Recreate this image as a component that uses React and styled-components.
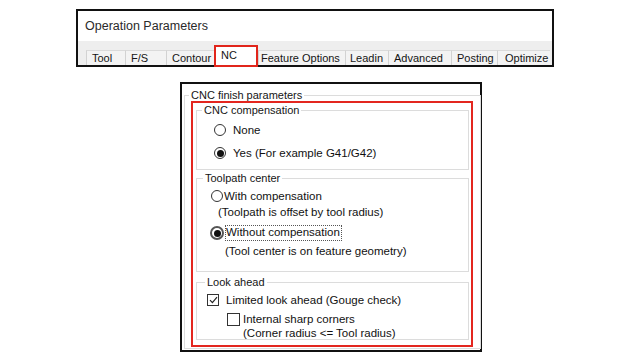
import React from "react";
import styled, { createGlobalStyle } from "styled-components";

const GlobalStyle = createGlobalStyle`
  body {
    margin: 0;
    background: #fff;
    font-family: "Liberation Sans", Arial, sans-serif;
    color: #111;
  }
`;

const Page = styled.div`
  width: 640px;
  height: 360px;
  display: flex;
  flex-direction: column;
  align-items: flex-start;
`;

/* top: operation parameters tab bar */
const OpPanel = styled.section`
  margin: 9px 0 0 76px;
  width: 478px;
  height: 58px;
  box-sizing: border-box;
  border: 2px solid #111;
  display: flex;
  flex-direction: column;
`;

const OpTitle = styled.div`
  height: 30px;
  padding-left: 7px;
  display: flex;
  align-items: center;
  font-size: 12.5px;
  color: #2a2a2a;
`;

const TabStrip = styled.div`
  flex: 1;
  background: #eeeeee;
  display: flex;
  align-items: flex-end;
  padding-left: 8px;
`;

const Tab = styled.div`
  width: ${(p) => p.$w}px;
  height: ${(p) => (p.$active ? 22 : 15)}px;
  margin-bottom: ${(p) => (p.$active ? -2 : 0)}px;
  box-sizing: border-box;
  padding-left: ${(p) => p.$pad}px;
  font-size: 11px;
  line-height: ${(p) => (p.$active ? 16 : 14)}px;
  color: #151515;
  white-space: nowrap;
  background: ${(p) => (p.$active ? "#fff" : "#f3f3f3")};
  border: ${(p) => (p.$active ? "2px solid #e1251b" : "none")};
  border-top: ${(p) => (p.$active ? "2px solid #e1251b" : "1px solid #dadada")};
  border-left: ${(p) => (p.$active ? "2px solid #e1251b" : "1px solid #d2d2d2")};
`;

/* bottom: CNC finish parameters dialog */
const Dialog = styled.section`
  margin: 15px 0 0 180px;
  width: 302px;
  height: 270px;
  box-sizing: border-box;
  border: 2px solid #111;
  padding: 0 1px;
`;

const Group = styled.fieldset`
  margin: ${(p) => p.$m};
  padding: 0;
  width: ${(p) => p.$w}px;
  height: ${(p) => p.$h}px;
  box-sizing: border-box;
  border: 1px solid #dcdcdc;
  min-width: 0;
`;

const Legend = styled.legend`
  margin-left: ${(p) => p.$x}px;
  padding: 0 2px;
  font-size: 11px;
  line-height: 11px;
  color: #151515;
`;

const Highlight = styled.div`
  margin-left: 6px;
  width: 282px;
  height: 246px;
  box-sizing: border-box;
  border: 2px solid #e3261f;
  padding: 2px 3px 0;
  display: flex;
  flex-direction: column;
`;

const Row = styled.div`
  display: flex;
  align-items: center;
  gap: ${(p) => p.$gap}px;
  margin: ${(p) => p.$top}px 0 0 ${(p) => p.$left}px;
  font-size: 11.5px;
  line-height: 14px;
  height: 14px;
  white-space: nowrap;
`;

const Note = styled.div`
  margin: ${(p) => p.$top}px 0 0 ${(p) => p.$left}px;
  font-size: 11.5px;
  line-height: 14px;
  white-space: nowrap;
`;

const Radio = styled.span`
  width: ${(p) => (p.$focus ? 14 : 12)}px;
  height: ${(p) => (p.$focus ? 14 : 12)}px;
  box-sizing: border-box;
  border-radius: 50%;
  border: ${(p) => (p.$focus ? "2px solid #555" : "1px solid #333")};
  background: #fff;
  display: grid;
  place-items: center;
  flex-shrink: 0;

  &::after {
    content: "";
    width: 7px;
    height: 7px;
    border-radius: 50%;
    background: #111;
    display: ${(p) => (p.$checked ? "block" : "none")};
  }
`;

const FocusLabel = styled.span`
  border: 1px dotted #555;
  padding: 0 1px 1px 0;
  line-height: 13px;
`;

const Box = styled.span`
  width: ${(p) => p.$size}px;
  height: ${(p) => p.$size}px;
  box-sizing: border-box;
  border: 1px solid #333;
  background: #fff;
  flex-shrink: 0;
  display: grid;
  place-items: center;
`;

const Check = ({ size, checked }) => (
  <Box $size={size}>
    {checked && (
      <svg width="9" height="8" viewBox="0 0 9 8">
        <path d="M1 4.2 L3.4 6.6 L8 1.2" fill="none" stroke="#222" strokeWidth="1.2" />
      </svg>
    )}
  </Box>
);

const tabs = [
  { label: "Tool", w: 39, pad: 5 },
  { label: "F/S", w: 41, pad: 5 },
  { label: "Contour", w: 48, pad: 5 },
  { label: "NC", w: 44, pad: 5, active: true },
  { label: "Feature Options", w: 87, pad: 2 },
  { label: "Leadin", w: 43, pad: 4 },
  { label: "Advanced", w: 63, pad: 5 },
  { label: "Posting", w: 46, pad: 5 },
  { label: "Optimize", w: 53, pad: 7 },
];

export default function App() {
  return (
    <Page>
      <GlobalStyle />
      <OpPanel>
        <OpTitle>Operation Parameters</OpTitle>
        <TabStrip>
          {tabs.map((t) => (
            <Tab key={t.label} $w={t.w} $pad={t.pad} $active={t.active}>
              {t.label}
            </Tab>
          ))}
        </TabStrip>
      </OpPanel>

      <Dialog>
        <Group $m="6px 0 0 1px" $w={297} $h={259}>
          <Legend $x={4}>CNC finish parameters</Legend>
          <Highlight>
            <Group $m="0" $w={273} $h={65}>
              <Legend $x={5}>CNC compensation</Legend>
              <Row $top={7} $left={17} $gap={7}>
                <Radio />
                None
              </Row>
              <Row $top={9} $left={17} $gap={7}>
                <Radio $checked />
                Yes (For example G41/G42)
              </Row>
            </Group>

            <Group $m="3px 0 0 0" $w={273} $h={99}>
              <Legend $x={6}>Toolpath center</Legend>
              <Row $top={5} $left={14} $gap={1}>
                <Radio />
                With compensation
              </Row>
              <Note $top={2} $left={21}>(Toolpath is offset by tool radius)</Note>
              <Row $top={7} $left={13} $gap={1}>
                <Radio $checked $focus />
                <FocusLabel>Without compensation</FocusLabel>
              </Row>
              <Note $top={4} $left={28}>(Tool center is on feature geometry)</Note>
            </Group>

            <Group $m="5px 0 0 0" $w={273} $h={63}>
              <Legend $x={8}>Look ahead</Legend>
              <Row $top={5} $left={10} $gap={7}>
                <Check size={12} checked />
                Limited look ahead (Gouge check)
              </Row>
              <Row $top={5} $left={30} $gap={3}>
                <Check size={13} />
                Internal sharp corners
              </Row>
              <Note $top={0} $left={46}>(Corner radius &lt;= Tool radius)</Note>
            </Group>
          </Highlight>
        </Group>
      </Dialog>
    </Page>
  );
}
